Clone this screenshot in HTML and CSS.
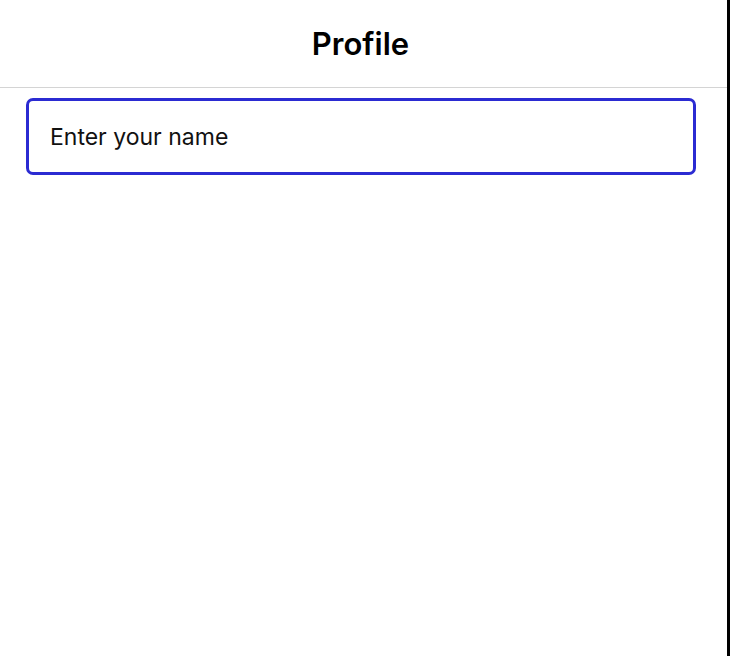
FILE: index.html
```html
<!DOCTYPE html>
<html>
<head>
<meta charset="utf-8">
<link rel="stylesheet" href="styles.css">
</head>
<body>
<div class="screen">
  <div class="content">
    <header class="header"><h1 class="title">Profile</h1></header>
    <div class="form">
      <input class="name-input" type="text" placeholder="Enter your name">
    </div>
  </div>
  <div class="edge"></div>
</div>
</body>
</html>
```
FILE: styles.css
```css
html, body {
  margin: 0;
  padding: 0;
  background: #fff;
}
.screen {
  display: flex;
  width: 730px;
  height: 656px;
}
.content {
  flex: 1;
  display: flex;
  flex-direction: column;
}
.edge {
  width: 3px;
  background: #000;
}
.header {
  height: 87px;
  border-bottom: 1px solid #d4d4d4;
  display: flex;
  align-items: center;
  justify-content: center;
  padding-right: 6px;
}
.title {
  margin: 0;
  font-family: Inter, "Noto Sans", sans-serif;
  font-weight: 600;
  font-size: 31px;
  line-height: 1;
  color: #000;
}
.form {
  padding: 10px 0 0 26px;
}
.name-input {
  box-sizing: border-box;
  width: 670px;
  height: 77px;
  border: 3px solid #2b2bd2;
  border-radius: 7px;
  padding: 0 0 0 21px;
  font-family: Inter, "Noto Sans", sans-serif;
  font-size: 23px;
  color: #000;
  outline: none;
  background: #fff;
}
.name-input::placeholder {
  color: #111;
  opacity: 1;
}
```
